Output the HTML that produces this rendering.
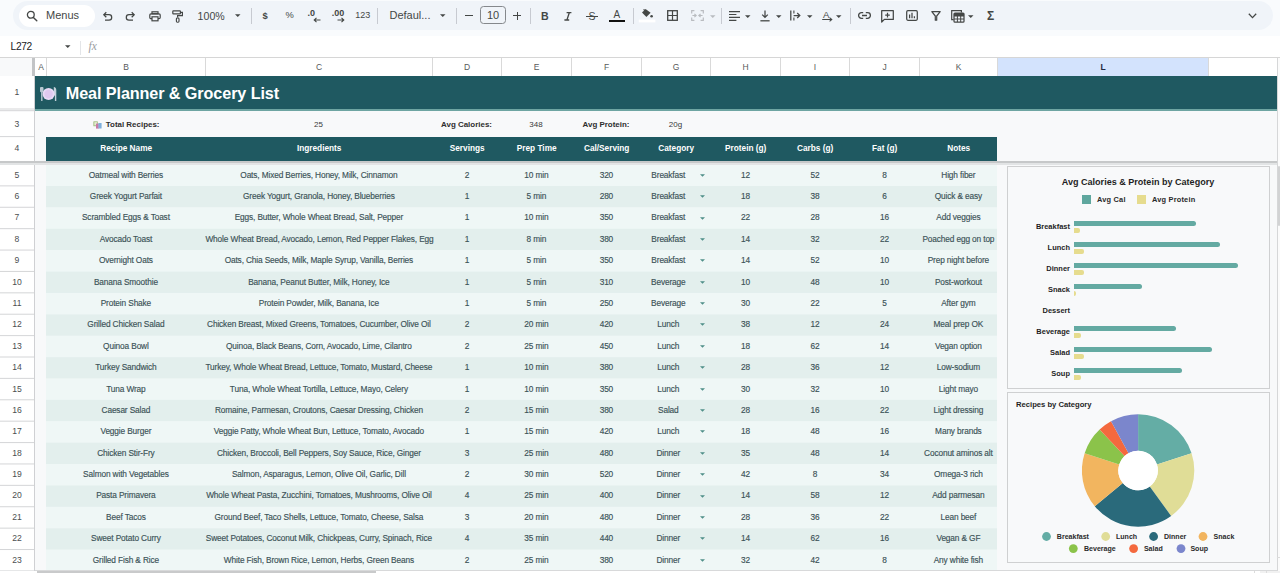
<!DOCTYPE html>
<html lang="en"><head><meta charset="utf-8"><title>Meal Planner &amp; Grocery List</title>
<style>
html,body{margin:0;padding:0}
body{width:1280px;height:573px;overflow:hidden;position:relative;background:#f9fbfd;font-family:"Liberation Sans",Arial,sans-serif;color:#444746}
.abs,.c,.t{position:absolute}
.t{white-space:nowrap;line-height:1}
.c{white-space:nowrap;text-align:center;z-index:2;font-size:8.3px;letter-spacing:-0.13px;-webkit-text-stroke:0.15px #3b5257;color:#3b5257;line-height:21.4px;height:21.4px}
.h{position:absolute;white-space:nowrap;text-align:center;font-size:8.25px;font-weight:700;color:#fff;line-height:24px;height:24px;top:136.5px}
.ch{position:absolute;top:58px;height:18px;line-height:18px;font-size:8.5px;color:#575a5a;text-align:center;border-right:1px solid #d9d9d9;box-sizing:border-box}
.rh{position:absolute;left:0;width:34px;text-align:center;font-size:8.6px;color:#4c4f50;box-sizing:border-box}
.sep{position:absolute;top:8px;width:1px;height:16px;background:#c7cad1}
.tb{position:absolute;font-size:11px;color:#444746;white-space:nowrap;line-height:1}
svg{position:absolute;overflow:visible}
</style></head><body>

<div class="abs" style="left:13px;top:1px;width:1260px;height:29px;border-radius:15px;background:#f0f4f9"></div>
<div class="abs" style="left:18.5px;top:5px;width:76px;height:21.5px;border-radius:11px;background:#fff"></div>
<svg style="left:26px;top:10px" width="12" height="12" viewBox="0 0 12 12"><circle cx="4.8" cy="4.8" r="3.4" fill="none" stroke="#444746" stroke-width="1.3"/><path d="M7.4 7.4 L10.8 10.8" stroke="#444746" stroke-width="1.4" stroke-linecap="round"/></svg>
<div class="tb" style="left:46px;top:10px;font-size:11px">Menus</div>
<svg style="left:102px;top:11px" width="11" height="11" viewBox="0 0 11 11"><path d="M2 3.7 H7 A2.7 2.7 0 0 1 7 9.1 H3" fill="none" stroke="#444746" stroke-width="1.25"/><path d="M4.3 1.2 L1.8 3.7 L4.3 6.2" fill="none" stroke="#444746" stroke-width="1.25"/></svg>
<svg style="left:125px;top:11px" width="11" height="11" viewBox="0 0 11 11"><path d="M9 3.7 H4 A2.7 2.7 0 0 0 4 9.1 H8" fill="none" stroke="#444746" stroke-width="1.25"/><path d="M6.7 1.2 L9.2 3.7 L6.7 6.2" fill="none" stroke="#444746" stroke-width="1.25"/></svg>
<svg style="left:148.5px;top:9.5px" width="12" height="12" viewBox="0 0 12 12"><rect x="3" y="1.8" width="6" height="2" fill="none" stroke="#444746" stroke-width="1.2"/><rect x="0.8" y="3.8" width="10.4" height="4.8" rx="1.2" fill="none" stroke="#444746" stroke-width="1.2"/><rect x="3" y="6.8" width="6" height="4" fill="#f0f4f9" stroke="#444746" stroke-width="1.2"/></svg>
<svg style="left:172px;top:10px" width="12" height="13" viewBox="0 0 12 13"><rect x="0.8" y="0.8" width="7.6" height="3" rx="0.6" fill="none" stroke="#444746" stroke-width="1.2"/><path d="M8.4 2.3 H10.4 V5.6 H5.6 V7.6" fill="none" stroke="#444746" stroke-width="1.2"/><rect x="4.4" y="8" width="2.6" height="4.2" rx="0.9" fill="none" stroke="#444746" stroke-width="1.15"/></svg>
<div class="tb" style="left:197.6px;top:10.8px;font-size:10.6px">100%</div>
<svg style="left:234.7px;top:14.0px" width="5.5" height="3.0" viewBox="0 0 10 5"><path d="M0 0 H10 L5 5 Z" fill="#444746"/></svg>
<div class="sep" style="left:251px"></div>
<div class="tb" style="left:262.6px;top:10.8px;font-size:9.4px;font-weight:700">$</div>
<div class="tb" style="left:285.6px;top:11px;font-size:9.3px">%</div>
<div class="tb" style="left:307.4px;top:9.3px;font-size:9px;font-weight:700">.0</div>
<svg style="left:313px;top:17px" width="8" height="6" viewBox="0 0 8 6"><path d="M7.5 3 H1.5 M3.5 0.8 L1.2 3 L3.5 5.2" fill="none" stroke="#444746" stroke-width="1.1"/></svg>
<div class="tb" style="left:331.8px;top:9.3px;font-size:9px;font-weight:700">.00</div>
<svg style="left:337px;top:17px" width="8" height="6" viewBox="0 0 8 6"><path d="M0.5 3 H6.5 M4.5 0.8 L6.8 3 L4.5 5.2" fill="none" stroke="#444746" stroke-width="1.1"/></svg>
<div class="tb" style="left:355.2px;top:11px;font-size:9px">123</div>
<div class="sep" style="left:377px"></div>
<div class="tb" style="left:389.5px;top:10px;font-size:11px">Defaul...</div>
<svg style="left:439.8px;top:14.1px" width="5.5" height="3.0" viewBox="0 0 10 5"><path d="M0 0 H10 L5 5 Z" fill="#444746"/></svg>
<div class="sep" style="left:456px"></div>
<div class="abs" style="left:465px;top:15px;width:7.5px;height:1.3px;background:#444746"></div>
<div class="abs" style="left:480.3px;top:6.3px;width:25.6px;height:18.2px;border:1px solid #85888c;border-radius:3.5px;box-sizing:border-box"></div>
<div class="tb" style="left:480.5px;top:10px;width:25px;text-align:center;font-size:11px">10</div>
<div class="abs" style="left:513px;top:15.1px;width:8px;height:1.1px;background:#444746"></div>
<div class="abs" style="left:516.5px;top:11.6px;width:1.1px;height:8px;background:#444746"></div>
<div class="sep" style="left:529.5px"></div>
<div class="tb" style="left:541px;top:10.6px;font-size:10.6px;font-weight:700">B</div>
<svg style="left:564px;top:11.5px" width="8" height="9" viewBox="0 0 8 9"><path d="M2.6 0.7 H7.4 M0.4 8 H5.2 M5.3 0.7 L2.9 8" fill="none" stroke="#444746" stroke-width="1.3"/></svg>
<div class="tb" style="left:588.5px;top:10.5px;font-size:10.5px">S</div>
<div class="abs" style="left:586px;top:15.6px;width:11.5px;height:1.1px;background:#444746"></div>
<div class="tb" style="left:613.6px;top:9.6px;font-size:10px">A</div>
<div class="abs" style="left:608.7px;top:19.8px;width:16.2px;height:2.5px;background:#111"></div>
<div class="sep" style="left:632.5px"></div>
<svg style="left:641px;top:8px" width="13" height="15" viewBox="0 0 13 15"><path d="M4.6 1 L1 4.6 L5.4 9 L9.6 4.8 Z" fill="#444746"/><path d="M2.6 1.4 L5.4 4" stroke="#444746" stroke-width="1.2" fill="none"/><circle cx="10.6" cy="8.2" r="1.3" fill="#444746"/><rect x="-2.2" y="11.6" width="16.6" height="2.8" fill="#fff"/></svg>
<svg style="left:667px;top:10px" width="11" height="11" viewBox="0 0 11 11"><rect x="0.7" y="0.7" width="9.6" height="9.6" fill="none" stroke="#444746" stroke-width="1.3"/><path d="M5.5 0.7 V10.3 M0.7 5.5 H10.3" stroke="#444746" stroke-width="1.2"/></svg>
<svg style="left:691px;top:10px" width="13" height="11" viewBox="0 0 13 11"><path d="M3.4 0.7 H0.7 V3.4 M9.6 0.7 H12.3 V3.4 M3.4 10.3 H0.7 V7.6 M9.6 10.3 H12.3 V7.6" fill="none" stroke="#b9bcc0" stroke-width="1.2"/><path d="M1.4 5.5 H5 M3.4 3.8 L5.2 5.5 L3.4 7.2 M11.6 5.5 H8 M9.6 3.8 L7.8 5.5 L9.6 7.2" fill="none" stroke="#b9bcc0" stroke-width="1.1"/></svg>
<svg style="left:709.8px;top:14.5px" width="5.5" height="3.0" viewBox="0 0 10 5"><path d="M0 0 H10 L5 5 Z" fill="#b9bcc0"/></svg>
<div class="sep" style="left:721px"></div>
<svg style="left:729px;top:10.5px" width="11" height="10" viewBox="0 0 11 10"><path d="M0 0.6 H11 M0 3.5 H7.4 M0 6.4 H11 M0 9.3 H7.4" stroke="#444746" stroke-width="1.15"/></svg>
<svg style="left:744.8px;top:14.5px" width="5.5" height="3.0" viewBox="0 0 10 5"><path d="M0 0 H10 L5 5 Z" fill="#444746"/></svg>
<svg style="left:760px;top:9.5px" width="10" height="12" viewBox="0 0 10 12"><path d="M5 0.4 V7 M2.2 4.6 L5 7.4 L7.8 4.6" fill="none" stroke="#444746" stroke-width="1.25"/><path d="M0.4 10.8 H9.6" stroke="#444746" stroke-width="1.3"/></svg>
<svg style="left:776.2px;top:14.5px" width="5.5" height="3.0" viewBox="0 0 10 5"><path d="M0 0 H10 L5 5 Z" fill="#444746"/></svg>
<svg style="left:790px;top:10px" width="11" height="11" viewBox="0 0 11 11"><path d="M0.8 0.4 V10.6" stroke="#444746" stroke-width="1.3"/><path d="M3.6 5.5 H9.6 M7.2 3 L9.8 5.5 L7.2 8" fill="none" stroke="#444746" stroke-width="1.25"/><path d="M3.9 0.6 V3.4 M3.9 7.6 V10.4" stroke="#444746" stroke-width="1.1"/></svg>
<svg style="left:806.8px;top:14.5px" width="5.5" height="3.0" viewBox="0 0 10 5"><path d="M0 0 H10 L5 5 Z" fill="#444746"/></svg>
<div class="tb" style="left:823px;top:10.4px;font-size:9.6px">A</div>
<svg style="left:821.5px;top:17.4px" width="11" height="5" viewBox="0 0 11 5"><path d="M0.2 2.5 H9.4 M7.6 0.6 L9.8 2.5 L7.6 4.4" fill="none" stroke="#444746" stroke-width="1.05"/></svg>
<svg style="left:836.2px;top:14.5px" width="5.5" height="3.0" viewBox="0 0 10 5"><path d="M0 0 H10 L5 5 Z" fill="#444746"/></svg>
<div class="sep" style="left:849.5px"></div>
<svg style="left:857.5px;top:12px" width="13" height="7" viewBox="0 0 13 7"><path d="M5.2 0.7 H3.4 A2.8 2.8 0 0 0 3.4 6.3 H5.2 M7.8 0.7 H9.6 A2.8 2.8 0 0 1 9.6 6.3 H7.8 M4 3.5 H9" fill="none" stroke="#444746" stroke-width="1.3"/></svg>
<svg style="left:881px;top:9.5px" width="13" height="13" viewBox="0 0 13 13"><path d="M0.7 0.7 H12.3 V9.4 H3.4 L0.7 12 Z" fill="none" stroke="#444746" stroke-width="1.25" stroke-linejoin="round"/><path d="M6.5 2.8 V7.4 M4.2 5.1 H8.8" stroke="#444746" stroke-width="1.2"/></svg>
<svg style="left:905.5px;top:10px" width="12" height="11" viewBox="0 0 12 11"><rect x="0.7" y="0.7" width="10.6" height="9.6" rx="1.2" fill="none" stroke="#444746" stroke-width="1.25"/><path d="M3.6 8.2 V4.6 M6 8.2 V2.8 M8.4 8.2 V6.2" stroke="#444746" stroke-width="1.25"/></svg>
<svg style="left:931px;top:10.5px" width="10" height="10" viewBox="0 0 10 10"><path d="M0.8 0.7 H9.2 L5.7 5 V9.2 H4.3 V5 Z" fill="none" stroke="#444746" stroke-width="1.2" stroke-linejoin="round"/></svg>
<svg style="left:950.5px;top:9.5px" width="14" height="13" viewBox="0 0 14 13"><path d="M2.6 9.6 H0.7 V0.7 H10.4 V2.4" fill="none" stroke="#444746" stroke-width="1.2"/><rect x="3" y="3" width="10" height="9.2" rx="1" fill="none" stroke="#444746" stroke-width="1.25"/><path d="M3 6 H13 M3 9 H13 M6.4 6 V12 M9.7 6 V12" stroke="#444746" stroke-width="1"/><rect x="3" y="3" width="10" height="3" fill="#444746"/></svg>
<svg style="left:968.2px;top:14.5px" width="5.5" height="3.0" viewBox="0 0 10 5"><path d="M0 0 H10 L5 5 Z" fill="#444746"/></svg>
<div class="tb" style="left:987px;top:9.5px;font-size:12px;font-weight:700">Σ</div>
<svg style="left:1248px;top:13px" width="9" height="6" viewBox="0 0 9 6"><path d="M0.8 0.8 L4.5 4.6 L8.2 0.8" fill="none" stroke="#444746" stroke-width="1.3"/></svg>
<div class="abs" style="left:0;top:36px;width:1280px;height:21px;background:#fff"></div>
<div class="tb" style="left:10.6px;top:41.8px;font-size:10.2px;letter-spacing:-0.35px;color:#202124">L272</div>
<svg style="left:65.0px;top:45.4px" width="5.5" height="3.0" viewBox="0 0 10 5"><path d="M0 0 H10 L5 5 Z" fill="#444746"/></svg>
<div class="abs" style="left:79.5px;top:41px;width:1px;height:14px;background:#e3e5e8"></div>
<div class="tb" style="left:88.5px;top:40.5px;font-size:11.5px;font-style:italic;color:#9a9d9f;font-family:'Liberation Serif',serif">fx</div>
<div class="abs" style="left:0;top:57px;width:1280px;height:1px;background:#d6d6d6"></div>
<div class="abs" style="left:0;top:58px;width:1277px;height:515px;background:#fff"></div>
<div class="abs" style="left:0;top:58px;width:32px;height:18px;background:#f8f9fa"></div>
<div class="ch" style="left:36px;width:11px">A</div>
<div class="ch" style="left:47px;width:159px">B</div>
<div class="ch" style="left:206px;width:227px">C</div>
<div class="ch" style="left:433px;width:69px">D</div>
<div class="ch" style="left:502px;width:70px">E</div>
<div class="ch" style="left:572px;width:70px">F</div>
<div class="ch" style="left:642px;width:69px">G</div>
<div class="ch" style="left:711px;width:70px">H</div>
<div class="ch" style="left:781px;width:69px">I</div>
<div class="ch" style="left:850px;width:70px">J</div>
<div class="ch" style="left:920px;width:78px">K</div>
<div class="ch" style="left:998px;width:211px;background:#d3e3fd;color:#1f2a44;font-weight:700">L</div>
<div class="ch" style="left:1208px;width:69px;border-right:none"></div>
<div class="abs" style="left:32px;top:58px;width:3px;height:18px;background:#c2c4c6"></div>
<div class="abs" style="left:0;top:75.5px;width:35px;height:1px;background:#d5d5d5"></div>
<div class="abs" style="left:35px;top:76px;width:1242px;height:495px;background:#f8f9fa"></div>
<div class="abs" style="left:35px;top:76px;width:1241.5px;height:32.7px;background:#1f5961"></div>
<div class="abs" style="left:35px;top:108.7px;width:1241.5px;height:2px;background:#6ea5a2"></div>
<svg style="left:39px;top:86px" width="18" height="16" viewBox="0 0 18 16"><rect x="1" y="1" width="3.5" height="5.2" rx="1" fill="#b7c7d2"/><rect x="2.1" y="1" width="1.4" height="14" rx="0.6" fill="#b7c7d2"/><path d="M14.8 1 Q17.3 1.2 17.3 4.5 V15 H15.9 V9.4 H14.8 Z" fill="#c3d1da"/><circle cx="9.6" cy="8" r="6.1" fill="#e9daf5"/><circle cx="9.6" cy="8" r="4.2" fill="#e0c9ef"/></svg>
<div class="t" style="left:65.8px;top:85.2px;font-size:16.2px;letter-spacing:-0.1px;font-weight:700;color:#fff">Meal Planner &amp; Grocery List</div>
<svg style="left:93.4px;top:120.8px" width="9" height="8" viewBox="0 0 9 8"><rect x="0.3" y="0.3" width="4.6" height="5" rx="0.6" fill="#a9c48a"/><rect x="1.4" y="1.2" width="2.6" height="3" fill="#e6ecd2"/><rect x="3" y="2.6" width="2.8" height="5" fill="#c77aa8"/><rect x="5.4" y="2" width="3.2" height="5.6" rx="0.5" fill="#7fb0dc"/></svg>
<div class="t" style="left:105.8px;top:112px;height:26px;line-height:26px;font-size:7.95px;font-weight:700;color:#2e2e2e">Total Recipes:</div>
<div class="t" style="left:205px;width:227px;top:112px;height:26px;line-height:26px;text-align:center;font-size:8px;font-weight:400;color:#3a3a3a">25</div>
<div class="t" style="left:432px;width:69px;top:112px;height:26px;line-height:26px;text-align:center;font-size:7.95px;font-weight:700;color:#2e2e2e">Avg Calories:</div>
<div class="t" style="left:501px;width:70px;top:112px;height:26px;line-height:26px;text-align:center;font-size:8px;font-weight:400;color:#3a3a3a">348</div>
<div class="t" style="left:571px;width:70px;top:112px;height:26px;line-height:26px;text-align:center;font-size:7.95px;font-weight:700;color:#2e2e2e">Avg Protein:</div>
<div class="t" style="left:641px;width:69px;top:112px;height:26px;line-height:26px;text-align:center;font-size:8px;font-weight:400;color:#3a3a3a">20g</div>
<div class="abs" style="left:46px;top:137px;width:951px;height:23.7px;background:#1f5961"></div>
<div class="h" style="left:46.7px;width:159px">Recipe Name</div>
<div class="h" style="left:205.7px;width:227px">Ingredients</div>
<div class="h" style="left:432.7px;width:69px">Servings</div>
<div class="h" style="left:501.7px;width:70px">Prep Time</div>
<div class="h" style="left:571.7px;width:70px">Cal/Serving</div>
<div class="h" style="left:641.7px;width:69px">Category</div>
<div class="h" style="left:710.7px;width:70px">Protein (g)</div>
<div class="h" style="left:780.7px;width:69px">Carbs (g)</div>
<div class="h" style="left:849.7px;width:70px">Fat (g)</div>
<div class="h" style="left:919.7px;width:78px">Notes</div>
<svg style="left:46px;top:0" width="951" height="573"><rect x="0" y="164.60" width="951" height="21.69" fill="#eff7f6"/></svg>
<div class="c" style="left:46.4px;width:159px;top:164.60px">Oatmeal with Berries</div>
<div class="c" style="left:205.4px;width:227px;top:164.60px">Oats, Mixed Berries, Honey, Milk, Cinnamon</div>
<div class="c" style="left:432.4px;width:69px;top:164.60px">2</div>
<div class="c" style="left:501.4px;width:70px;top:164.60px">10 min</div>
<div class="c" style="left:571.4px;width:70px;top:164.60px">320</div>
<div class="c" style="left:640.8px;width:55px;top:164.60px">Breakfast</div>
<svg style="left:700.1px;top:173.7px" width="5.0" height="2.8" viewBox="0 0 10 5"><path d="M0 0 H10 L5 5 Z" fill="#4f8f88"/></svg>
<div class="c" style="left:710.4px;width:70px;top:164.60px">12</div>
<div class="c" style="left:780.4px;width:69px;top:164.60px">52</div>
<div class="c" style="left:849.4px;width:70px;top:164.60px">8</div>
<div class="c" style="left:919.4px;width:78px;top:164.60px">High fiber</div>
<svg style="left:46px;top:0" width="951" height="573"><rect x="0" y="185.99" width="951" height="21.69" fill="#e3efed"/></svg>
<div class="c" style="left:46.4px;width:159px;top:185.99px">Greek Yogurt Parfait</div>
<div class="c" style="left:205.4px;width:227px;top:185.99px">Greek Yogurt, Granola, Honey, Blueberries</div>
<div class="c" style="left:432.4px;width:69px;top:185.99px">1</div>
<div class="c" style="left:501.4px;width:70px;top:185.99px">5 min</div>
<div class="c" style="left:571.4px;width:70px;top:185.99px">280</div>
<div class="c" style="left:640.8px;width:55px;top:185.99px">Breakfast</div>
<svg style="left:700.1px;top:195.1px" width="5.0" height="2.8" viewBox="0 0 10 5"><path d="M0 0 H10 L5 5 Z" fill="#4f8f88"/></svg>
<div class="c" style="left:710.4px;width:70px;top:185.99px">18</div>
<div class="c" style="left:780.4px;width:69px;top:185.99px">38</div>
<div class="c" style="left:849.4px;width:70px;top:185.99px">6</div>
<div class="c" style="left:919.4px;width:78px;top:185.99px">Quick &amp; easy</div>
<svg style="left:46px;top:0" width="951" height="573"><rect x="0" y="207.38" width="951" height="21.69" fill="#eff7f6"/></svg>
<div class="c" style="left:46.4px;width:159px;top:207.38px">Scrambled Eggs &amp; Toast</div>
<div class="c" style="left:205.4px;width:227px;top:207.38px">Eggs, Butter, Whole Wheat Bread, Salt, Pepper</div>
<div class="c" style="left:432.4px;width:69px;top:207.38px">1</div>
<div class="c" style="left:501.4px;width:70px;top:207.38px">10 min</div>
<div class="c" style="left:571.4px;width:70px;top:207.38px">350</div>
<div class="c" style="left:640.8px;width:55px;top:207.38px">Breakfast</div>
<svg style="left:700.1px;top:216.5px" width="5.0" height="2.8" viewBox="0 0 10 5"><path d="M0 0 H10 L5 5 Z" fill="#4f8f88"/></svg>
<div class="c" style="left:710.4px;width:70px;top:207.38px">22</div>
<div class="c" style="left:780.4px;width:69px;top:207.38px">28</div>
<div class="c" style="left:849.4px;width:70px;top:207.38px">16</div>
<div class="c" style="left:919.4px;width:78px;top:207.38px">Add veggies</div>
<svg style="left:46px;top:0" width="951" height="573"><rect x="0" y="228.77" width="951" height="21.69" fill="#e3efed"/></svg>
<div class="c" style="left:46.4px;width:159px;top:228.77px">Avocado Toast</div>
<div class="c" style="left:205.4px;width:227px;top:228.77px">Whole Wheat Bread, Avocado, Lemon, Red Pepper Flakes, Egg</div>
<div class="c" style="left:432.4px;width:69px;top:228.77px">1</div>
<div class="c" style="left:501.4px;width:70px;top:228.77px">8 min</div>
<div class="c" style="left:571.4px;width:70px;top:228.77px">380</div>
<div class="c" style="left:640.8px;width:55px;top:228.77px">Breakfast</div>
<svg style="left:700.1px;top:237.9px" width="5.0" height="2.8" viewBox="0 0 10 5"><path d="M0 0 H10 L5 5 Z" fill="#4f8f88"/></svg>
<div class="c" style="left:710.4px;width:70px;top:228.77px">14</div>
<div class="c" style="left:780.4px;width:69px;top:228.77px">32</div>
<div class="c" style="left:849.4px;width:70px;top:228.77px">22</div>
<div class="c" style="left:919.4px;width:78px;top:228.77px">Poached egg on top</div>
<svg style="left:46px;top:0" width="951" height="573"><rect x="0" y="250.16" width="951" height="21.69" fill="#eff7f6"/></svg>
<div class="c" style="left:46.4px;width:159px;top:250.16px">Overnight Oats</div>
<div class="c" style="left:205.4px;width:227px;top:250.16px">Oats, Chia Seeds, Milk, Maple Syrup, Vanilla, Berries</div>
<div class="c" style="left:432.4px;width:69px;top:250.16px">1</div>
<div class="c" style="left:501.4px;width:70px;top:250.16px">5 min</div>
<div class="c" style="left:571.4px;width:70px;top:250.16px">350</div>
<div class="c" style="left:640.8px;width:55px;top:250.16px">Breakfast</div>
<svg style="left:700.1px;top:259.3px" width="5.0" height="2.8" viewBox="0 0 10 5"><path d="M0 0 H10 L5 5 Z" fill="#4f8f88"/></svg>
<div class="c" style="left:710.4px;width:70px;top:250.16px">14</div>
<div class="c" style="left:780.4px;width:69px;top:250.16px">52</div>
<div class="c" style="left:849.4px;width:70px;top:250.16px">10</div>
<div class="c" style="left:919.4px;width:78px;top:250.16px">Prep night before</div>
<svg style="left:46px;top:0" width="951" height="573"><rect x="0" y="271.55" width="951" height="21.69" fill="#e3efed"/></svg>
<div class="c" style="left:46.4px;width:159px;top:271.55px">Banana Smoothie</div>
<div class="c" style="left:205.4px;width:227px;top:271.55px">Banana, Peanut Butter, Milk, Honey, Ice</div>
<div class="c" style="left:432.4px;width:69px;top:271.55px">1</div>
<div class="c" style="left:501.4px;width:70px;top:271.55px">5 min</div>
<div class="c" style="left:571.4px;width:70px;top:271.55px">310</div>
<div class="c" style="left:640.8px;width:55px;top:271.55px">Beverage</div>
<svg style="left:700.1px;top:280.6px" width="5.0" height="2.8" viewBox="0 0 10 5"><path d="M0 0 H10 L5 5 Z" fill="#4f8f88"/></svg>
<div class="c" style="left:710.4px;width:70px;top:271.55px">10</div>
<div class="c" style="left:780.4px;width:69px;top:271.55px">48</div>
<div class="c" style="left:849.4px;width:70px;top:271.55px">10</div>
<div class="c" style="left:919.4px;width:78px;top:271.55px">Post-workout</div>
<svg style="left:46px;top:0" width="951" height="573"><rect x="0" y="292.94" width="951" height="21.69" fill="#eff7f6"/></svg>
<div class="c" style="left:46.4px;width:159px;top:292.94px">Protein Shake</div>
<div class="c" style="left:205.4px;width:227px;top:292.94px">Protein Powder, Milk, Banana, Ice</div>
<div class="c" style="left:432.4px;width:69px;top:292.94px">1</div>
<div class="c" style="left:501.4px;width:70px;top:292.94px">5 min</div>
<div class="c" style="left:571.4px;width:70px;top:292.94px">250</div>
<div class="c" style="left:640.8px;width:55px;top:292.94px">Beverage</div>
<svg style="left:700.1px;top:302.0px" width="5.0" height="2.8" viewBox="0 0 10 5"><path d="M0 0 H10 L5 5 Z" fill="#4f8f88"/></svg>
<div class="c" style="left:710.4px;width:70px;top:292.94px">30</div>
<div class="c" style="left:780.4px;width:69px;top:292.94px">22</div>
<div class="c" style="left:849.4px;width:70px;top:292.94px">5</div>
<div class="c" style="left:919.4px;width:78px;top:292.94px">After gym</div>
<svg style="left:46px;top:0" width="951" height="573"><rect x="0" y="314.33" width="951" height="21.69" fill="#e3efed"/></svg>
<div class="c" style="left:46.4px;width:159px;top:314.33px">Grilled Chicken Salad</div>
<div class="c" style="left:205.4px;width:227px;top:314.33px">Chicken Breast, Mixed Greens, Tomatoes, Cucumber, Olive Oil</div>
<div class="c" style="left:432.4px;width:69px;top:314.33px">2</div>
<div class="c" style="left:501.4px;width:70px;top:314.33px">20 min</div>
<div class="c" style="left:571.4px;width:70px;top:314.33px">420</div>
<div class="c" style="left:640.8px;width:55px;top:314.33px">Lunch</div>
<svg style="left:700.1px;top:323.4px" width="5.0" height="2.8" viewBox="0 0 10 5"><path d="M0 0 H10 L5 5 Z" fill="#4f8f88"/></svg>
<div class="c" style="left:710.4px;width:70px;top:314.33px">38</div>
<div class="c" style="left:780.4px;width:69px;top:314.33px">12</div>
<div class="c" style="left:849.4px;width:70px;top:314.33px">24</div>
<div class="c" style="left:919.4px;width:78px;top:314.33px">Meal prep OK</div>
<svg style="left:46px;top:0" width="951" height="573"><rect x="0" y="335.72" width="951" height="21.69" fill="#eff7f6"/></svg>
<div class="c" style="left:46.4px;width:159px;top:335.72px">Quinoa Bowl</div>
<div class="c" style="left:205.4px;width:227px;top:335.72px">Quinoa, Black Beans, Corn, Avocado, Lime, Cilantro</div>
<div class="c" style="left:432.4px;width:69px;top:335.72px">2</div>
<div class="c" style="left:501.4px;width:70px;top:335.72px">25 min</div>
<div class="c" style="left:571.4px;width:70px;top:335.72px">450</div>
<div class="c" style="left:640.8px;width:55px;top:335.72px">Lunch</div>
<svg style="left:700.1px;top:344.8px" width="5.0" height="2.8" viewBox="0 0 10 5"><path d="M0 0 H10 L5 5 Z" fill="#4f8f88"/></svg>
<div class="c" style="left:710.4px;width:70px;top:335.72px">18</div>
<div class="c" style="left:780.4px;width:69px;top:335.72px">62</div>
<div class="c" style="left:849.4px;width:70px;top:335.72px">14</div>
<div class="c" style="left:919.4px;width:78px;top:335.72px">Vegan option</div>
<svg style="left:46px;top:0" width="951" height="573"><rect x="0" y="357.11" width="951" height="21.69" fill="#e3efed"/></svg>
<div class="c" style="left:46.4px;width:159px;top:357.11px">Turkey Sandwich</div>
<div class="c" style="left:205.4px;width:227px;top:357.11px">Turkey, Whole Wheat Bread, Lettuce, Tomato, Mustard, Cheese</div>
<div class="c" style="left:432.4px;width:69px;top:357.11px">1</div>
<div class="c" style="left:501.4px;width:70px;top:357.11px">10 min</div>
<div class="c" style="left:571.4px;width:70px;top:357.11px">380</div>
<div class="c" style="left:640.8px;width:55px;top:357.11px">Lunch</div>
<svg style="left:700.1px;top:366.2px" width="5.0" height="2.8" viewBox="0 0 10 5"><path d="M0 0 H10 L5 5 Z" fill="#4f8f88"/></svg>
<div class="c" style="left:710.4px;width:70px;top:357.11px">28</div>
<div class="c" style="left:780.4px;width:69px;top:357.11px">36</div>
<div class="c" style="left:849.4px;width:70px;top:357.11px">12</div>
<div class="c" style="left:919.4px;width:78px;top:357.11px">Low-sodium</div>
<svg style="left:46px;top:0" width="951" height="573"><rect x="0" y="378.50" width="951" height="21.69" fill="#eff7f6"/></svg>
<div class="c" style="left:46.4px;width:159px;top:378.50px">Tuna Wrap</div>
<div class="c" style="left:205.4px;width:227px;top:378.50px">Tuna, Whole Wheat Tortilla, Lettuce, Mayo, Celery</div>
<div class="c" style="left:432.4px;width:69px;top:378.50px">1</div>
<div class="c" style="left:501.4px;width:70px;top:378.50px">10 min</div>
<div class="c" style="left:571.4px;width:70px;top:378.50px">350</div>
<div class="c" style="left:640.8px;width:55px;top:378.50px">Lunch</div>
<svg style="left:700.1px;top:387.6px" width="5.0" height="2.8" viewBox="0 0 10 5"><path d="M0 0 H10 L5 5 Z" fill="#4f8f88"/></svg>
<div class="c" style="left:710.4px;width:70px;top:378.50px">30</div>
<div class="c" style="left:780.4px;width:69px;top:378.50px">32</div>
<div class="c" style="left:849.4px;width:70px;top:378.50px">10</div>
<div class="c" style="left:919.4px;width:78px;top:378.50px">Light mayo</div>
<svg style="left:46px;top:0" width="951" height="573"><rect x="0" y="399.89" width="951" height="21.69" fill="#e3efed"/></svg>
<div class="c" style="left:46.4px;width:159px;top:399.89px">Caesar Salad</div>
<div class="c" style="left:205.4px;width:227px;top:399.89px">Romaine, Parmesan, Croutons, Caesar Dressing, Chicken</div>
<div class="c" style="left:432.4px;width:69px;top:399.89px">2</div>
<div class="c" style="left:501.4px;width:70px;top:399.89px">15 min</div>
<div class="c" style="left:571.4px;width:70px;top:399.89px">380</div>
<div class="c" style="left:640.8px;width:55px;top:399.89px">Salad</div>
<svg style="left:700.1px;top:409.0px" width="5.0" height="2.8" viewBox="0 0 10 5"><path d="M0 0 H10 L5 5 Z" fill="#4f8f88"/></svg>
<div class="c" style="left:710.4px;width:70px;top:399.89px">28</div>
<div class="c" style="left:780.4px;width:69px;top:399.89px">16</div>
<div class="c" style="left:849.4px;width:70px;top:399.89px">22</div>
<div class="c" style="left:919.4px;width:78px;top:399.89px">Light dressing</div>
<svg style="left:46px;top:0" width="951" height="573"><rect x="0" y="421.28" width="951" height="21.69" fill="#eff7f6"/></svg>
<div class="c" style="left:46.4px;width:159px;top:421.28px">Veggie Burger</div>
<div class="c" style="left:205.4px;width:227px;top:421.28px">Veggie Patty, Whole Wheat Bun, Lettuce, Tomato, Avocado</div>
<div class="c" style="left:432.4px;width:69px;top:421.28px">1</div>
<div class="c" style="left:501.4px;width:70px;top:421.28px">15 min</div>
<div class="c" style="left:571.4px;width:70px;top:421.28px">420</div>
<div class="c" style="left:640.8px;width:55px;top:421.28px">Lunch</div>
<svg style="left:700.1px;top:430.4px" width="5.0" height="2.8" viewBox="0 0 10 5"><path d="M0 0 H10 L5 5 Z" fill="#4f8f88"/></svg>
<div class="c" style="left:710.4px;width:70px;top:421.28px">18</div>
<div class="c" style="left:780.4px;width:69px;top:421.28px">48</div>
<div class="c" style="left:849.4px;width:70px;top:421.28px">16</div>
<div class="c" style="left:919.4px;width:78px;top:421.28px">Many brands</div>
<svg style="left:46px;top:0" width="951" height="573"><rect x="0" y="442.67" width="951" height="21.69" fill="#e3efed"/></svg>
<div class="c" style="left:46.4px;width:159px;top:442.67px">Chicken Stir-Fry</div>
<div class="c" style="left:205.4px;width:227px;top:442.67px">Chicken, Broccoli, Bell Peppers, Soy Sauce, Rice, Ginger</div>
<div class="c" style="left:432.4px;width:69px;top:442.67px">3</div>
<div class="c" style="left:501.4px;width:70px;top:442.67px">25 min</div>
<div class="c" style="left:571.4px;width:70px;top:442.67px">480</div>
<div class="c" style="left:640.8px;width:55px;top:442.67px">Dinner</div>
<svg style="left:700.1px;top:451.8px" width="5.0" height="2.8" viewBox="0 0 10 5"><path d="M0 0 H10 L5 5 Z" fill="#4f8f88"/></svg>
<div class="c" style="left:710.4px;width:70px;top:442.67px">35</div>
<div class="c" style="left:780.4px;width:69px;top:442.67px">48</div>
<div class="c" style="left:849.4px;width:70px;top:442.67px">14</div>
<div class="c" style="left:919.4px;width:78px;top:442.67px">Coconut aminos alt</div>
<svg style="left:46px;top:0" width="951" height="573"><rect x="0" y="464.06" width="951" height="21.69" fill="#eff7f6"/></svg>
<div class="c" style="left:46.4px;width:159px;top:464.06px">Salmon with Vegetables</div>
<div class="c" style="left:205.4px;width:227px;top:464.06px">Salmon, Asparagus, Lemon, Olive Oil, Garlic, Dill</div>
<div class="c" style="left:432.4px;width:69px;top:464.06px">2</div>
<div class="c" style="left:501.4px;width:70px;top:464.06px">30 min</div>
<div class="c" style="left:571.4px;width:70px;top:464.06px">520</div>
<div class="c" style="left:640.8px;width:55px;top:464.06px">Dinner</div>
<svg style="left:700.1px;top:473.2px" width="5.0" height="2.8" viewBox="0 0 10 5"><path d="M0 0 H10 L5 5 Z" fill="#4f8f88"/></svg>
<div class="c" style="left:710.4px;width:70px;top:464.06px">42</div>
<div class="c" style="left:780.4px;width:69px;top:464.06px">8</div>
<div class="c" style="left:849.4px;width:70px;top:464.06px">34</div>
<div class="c" style="left:919.4px;width:78px;top:464.06px">Omega-3 rich</div>
<svg style="left:46px;top:0" width="951" height="573"><rect x="0" y="485.45" width="951" height="21.69" fill="#e3efed"/></svg>
<div class="c" style="left:46.4px;width:159px;top:485.45px">Pasta Primavera</div>
<div class="c" style="left:205.4px;width:227px;top:485.45px">Whole Wheat Pasta, Zucchini, Tomatoes, Mushrooms, Olive Oil</div>
<div class="c" style="left:432.4px;width:69px;top:485.45px">4</div>
<div class="c" style="left:501.4px;width:70px;top:485.45px">25 min</div>
<div class="c" style="left:571.4px;width:70px;top:485.45px">400</div>
<div class="c" style="left:640.8px;width:55px;top:485.45px">Dinner</div>
<svg style="left:700.1px;top:494.5px" width="5.0" height="2.8" viewBox="0 0 10 5"><path d="M0 0 H10 L5 5 Z" fill="#4f8f88"/></svg>
<div class="c" style="left:710.4px;width:70px;top:485.45px">14</div>
<div class="c" style="left:780.4px;width:69px;top:485.45px">58</div>
<div class="c" style="left:849.4px;width:70px;top:485.45px">12</div>
<div class="c" style="left:919.4px;width:78px;top:485.45px">Add parmesan</div>
<svg style="left:46px;top:0" width="951" height="573"><rect x="0" y="506.84" width="951" height="21.69" fill="#eff7f6"/></svg>
<div class="c" style="left:46.4px;width:159px;top:506.84px">Beef Tacos</div>
<div class="c" style="left:205.4px;width:227px;top:506.84px">Ground Beef, Taco Shells, Lettuce, Tomato, Cheese, Salsa</div>
<div class="c" style="left:432.4px;width:69px;top:506.84px">3</div>
<div class="c" style="left:501.4px;width:70px;top:506.84px">20 min</div>
<div class="c" style="left:571.4px;width:70px;top:506.84px">480</div>
<div class="c" style="left:640.8px;width:55px;top:506.84px">Dinner</div>
<svg style="left:700.1px;top:515.9px" width="5.0" height="2.8" viewBox="0 0 10 5"><path d="M0 0 H10 L5 5 Z" fill="#4f8f88"/></svg>
<div class="c" style="left:710.4px;width:70px;top:506.84px">28</div>
<div class="c" style="left:780.4px;width:69px;top:506.84px">36</div>
<div class="c" style="left:849.4px;width:70px;top:506.84px">22</div>
<div class="c" style="left:919.4px;width:78px;top:506.84px">Lean beef</div>
<svg style="left:46px;top:0" width="951" height="573"><rect x="0" y="528.23" width="951" height="21.69" fill="#e3efed"/></svg>
<div class="c" style="left:46.4px;width:159px;top:528.23px">Sweet Potato Curry</div>
<div class="c" style="left:205.4px;width:227px;top:528.23px">Sweet Potatoes, Coconut Milk, Chickpeas, Curry, Spinach, Rice</div>
<div class="c" style="left:432.4px;width:69px;top:528.23px">4</div>
<div class="c" style="left:501.4px;width:70px;top:528.23px">35 min</div>
<div class="c" style="left:571.4px;width:70px;top:528.23px">440</div>
<div class="c" style="left:640.8px;width:55px;top:528.23px">Dinner</div>
<svg style="left:700.1px;top:537.3px" width="5.0" height="2.8" viewBox="0 0 10 5"><path d="M0 0 H10 L5 5 Z" fill="#4f8f88"/></svg>
<div class="c" style="left:710.4px;width:70px;top:528.23px">14</div>
<div class="c" style="left:780.4px;width:69px;top:528.23px">62</div>
<div class="c" style="left:849.4px;width:70px;top:528.23px">16</div>
<div class="c" style="left:919.4px;width:78px;top:528.23px">Vegan &amp; GF</div>
<svg style="left:46px;top:0" width="951" height="573"><rect x="0" y="549.62" width="951" height="20.99" fill="#eff7f6"/></svg>
<div class="c" style="left:46.4px;width:159px;top:549.62px">Grilled Fish &amp; Rice</div>
<div class="c" style="left:205.4px;width:227px;top:549.62px">White Fish, Brown Rice, Lemon, Herbs, Green Beans</div>
<div class="c" style="left:432.4px;width:69px;top:549.62px">2</div>
<div class="c" style="left:501.4px;width:70px;top:549.62px">25 min</div>
<div class="c" style="left:571.4px;width:70px;top:549.62px">380</div>
<div class="c" style="left:640.8px;width:55px;top:549.62px">Dinner</div>
<svg style="left:700.1px;top:558.7px" width="5.0" height="2.8" viewBox="0 0 10 5"><path d="M0 0 H10 L5 5 Z" fill="#4f8f88"/></svg>
<div class="c" style="left:710.4px;width:70px;top:549.62px">32</div>
<div class="c" style="left:780.4px;width:69px;top:549.62px">42</div>
<div class="c" style="left:849.4px;width:70px;top:549.62px">8</div>
<div class="c" style="left:919.4px;width:78px;top:549.62px">Any white fish</div>
<div class="abs" style="left:0;top:161px;width:1277px;height:2.4px;background:#c6c8c9"></div>
<div class="abs" style="left:0;top:163.4px;width:1277px;height:1.2px;background:#e2e4e5"></div>
<div class="abs" style="left:0;top:76px;width:34px;height:497px;background:#fff"></div>
<div class="abs" style="left:34px;top:76px;width:1px;height:497px;background:#cfd0d3"></div>
<div class="rh" style="top:76.00px;height:33.30px;line-height:32.80px">1</div>
<div class="rh" style="top:111.00px;height:26.00px;line-height:26.90px">3</div>
<div class="rh" style="top:137.00px;height:24.00px;line-height:23.90px">4</div>
<div class="rh" style="top:164.60px;height:21.39px;line-height:20.89px">5</div>
<div class="rh" style="top:185.99px;height:21.39px;line-height:20.89px">6</div>
<div class="rh" style="top:207.38px;height:21.39px;line-height:20.89px">7</div>
<div class="rh" style="top:228.77px;height:21.39px;line-height:20.89px">8</div>
<div class="rh" style="top:250.16px;height:21.39px;line-height:20.89px">9</div>
<div class="rh" style="top:271.55px;height:21.39px;line-height:20.89px">10</div>
<div class="rh" style="top:292.94px;height:21.39px;line-height:20.89px">11</div>
<div class="rh" style="top:314.33px;height:21.39px;line-height:20.89px">12</div>
<div class="rh" style="top:335.72px;height:21.39px;line-height:20.89px">13</div>
<div class="rh" style="top:357.11px;height:21.39px;line-height:20.89px">14</div>
<div class="rh" style="top:378.50px;height:21.39px;line-height:20.89px">15</div>
<div class="rh" style="top:399.89px;height:21.39px;line-height:20.89px">16</div>
<div class="rh" style="top:421.28px;height:21.39px;line-height:20.89px">17</div>
<div class="rh" style="top:442.67px;height:21.39px;line-height:20.89px">18</div>
<div class="rh" style="top:464.06px;height:21.39px;line-height:20.89px">19</div>
<div class="rh" style="top:485.45px;height:21.39px;line-height:20.89px">20</div>
<div class="rh" style="top:506.84px;height:21.39px;line-height:20.89px">21</div>
<div class="rh" style="top:528.23px;height:21.39px;line-height:20.89px">22</div>
<div class="rh" style="top:549.62px;height:21.39px;line-height:20.89px">23</div>
<svg style="left:0;top:0" width="35" height="573">
<line x1="0" x2="34.5" y1="109.00" y2="109.00" stroke="#cfd0d3" stroke-width="0.9"/>
<line x1="0" x2="34.5" y1="110.70" y2="110.70" stroke="#cfd0d3" stroke-width="0.9"/>
<line x1="0" x2="34.5" y1="136.60" y2="136.60" stroke="#cfd0d3" stroke-width="0.9"/>
<line x1="0" x2="34.5" y1="185.89" y2="185.89" stroke="#cfd0d3" stroke-width="0.9"/>
<line x1="0" x2="34.5" y1="207.28" y2="207.28" stroke="#cfd0d3" stroke-width="0.9"/>
<line x1="0" x2="34.5" y1="228.67" y2="228.67" stroke="#cfd0d3" stroke-width="0.9"/>
<line x1="0" x2="34.5" y1="250.06" y2="250.06" stroke="#cfd0d3" stroke-width="0.9"/>
<line x1="0" x2="34.5" y1="271.45" y2="271.45" stroke="#cfd0d3" stroke-width="0.9"/>
<line x1="0" x2="34.5" y1="292.84" y2="292.84" stroke="#cfd0d3" stroke-width="0.9"/>
<line x1="0" x2="34.5" y1="314.23" y2="314.23" stroke="#cfd0d3" stroke-width="0.9"/>
<line x1="0" x2="34.5" y1="335.62" y2="335.62" stroke="#cfd0d3" stroke-width="0.9"/>
<line x1="0" x2="34.5" y1="357.01" y2="357.01" stroke="#cfd0d3" stroke-width="0.9"/>
<line x1="0" x2="34.5" y1="378.40" y2="378.40" stroke="#cfd0d3" stroke-width="0.9"/>
<line x1="0" x2="34.5" y1="399.79" y2="399.79" stroke="#cfd0d3" stroke-width="0.9"/>
<line x1="0" x2="34.5" y1="421.18" y2="421.18" stroke="#cfd0d3" stroke-width="0.9"/>
<line x1="0" x2="34.5" y1="442.57" y2="442.57" stroke="#cfd0d3" stroke-width="0.9"/>
<line x1="0" x2="34.5" y1="463.96" y2="463.96" stroke="#cfd0d3" stroke-width="0.9"/>
<line x1="0" x2="34.5" y1="485.35" y2="485.35" stroke="#cfd0d3" stroke-width="0.9"/>
<line x1="0" x2="34.5" y1="506.74" y2="506.74" stroke="#cfd0d3" stroke-width="0.9"/>
<line x1="0" x2="34.5" y1="528.13" y2="528.13" stroke="#cfd0d3" stroke-width="0.9"/>
<line x1="0" x2="34.5" y1="549.52" y2="549.52" stroke="#cfd0d3" stroke-width="0.9"/>
<line x1="0" x2="34.5" y1="570.91" y2="570.91" stroke="#cfd0d3" stroke-width="0.9"/>
</svg>
<div class="abs" style="left:0;top:161px;width:35px;height:2.4px;background:#c6c8c9"></div>
<div class="abs" style="left:0;top:163.4px;width:35px;height:1.2px;background:#e2e4e5"></div>
<div class="abs" style="left:1007px;top:166.3px;width:262.5px;height:222.5px;border:1.3px solid #cfd0d1;box-sizing:border-box;background:#f8f9fa"></div>
<div class="t" style="left:1007px;width:262px;top:177.8px;text-align:center;font-size:9.05px;font-weight:700;color:#1f1f1f">Avg Calories &amp; Protein by Category</div>
<div class="abs" style="left:1082px;top:195px;width:9px;height:9px;background:#5fa79e"></div>
<div class="t" style="left:1097px;top:195.5px;font-size:7.4px;font-weight:700;color:#2a2a2a;letter-spacing:0.2px">Avg Cal</div>
<div class="abs" style="left:1137px;top:195px;width:9px;height:9px;background:#e6dc8e"></div>
<div class="t" style="left:1152px;top:195.5px;font-size:7.4px;font-weight:700;color:#2a2a2a;letter-spacing:0.2px">Avg Protein</div>
<div class="t" style="left:1010px;width:60px;top:223.2px;text-align:right;font-size:7.45px;font-weight:700;color:#1e1e1e;letter-spacing:0.02px">Breakfast</div>
<div class="abs" style="left:1074px;top:221px;width:122.0px;height:5px;background:#64aaa2;border-radius:0 2.5px 2.5px 0"></div>
<div class="abs" style="left:1074px;top:228px;width:5.8px;height:4.6px;background:#e6dc8e;border-radius:0 2px 2px 0"></div>
<div class="t" style="left:1010px;width:60px;top:244.2px;text-align:right;font-size:7.45px;font-weight:700;color:#1e1e1e;letter-spacing:0.02px">Lunch</div>
<div class="abs" style="left:1074px;top:242px;width:146.0px;height:5px;background:#64aaa2;border-radius:0 2.5px 2.5px 0"></div>
<div class="abs" style="left:1074px;top:249px;width:9.8px;height:4.6px;background:#e6dc8e;border-radius:0 2px 2px 0"></div>
<div class="t" style="left:1010px;width:60px;top:265.2px;text-align:right;font-size:7.45px;font-weight:700;color:#1e1e1e;letter-spacing:0.02px">Dinner</div>
<div class="abs" style="left:1074px;top:263px;width:164.0px;height:5px;background:#64aaa2;border-radius:0 2.5px 2.5px 0"></div>
<div class="abs" style="left:1074px;top:270px;width:9.8px;height:4.6px;background:#e6dc8e;border-radius:0 2px 2px 0"></div>
<div class="t" style="left:1010px;width:60px;top:286.2px;text-align:right;font-size:7.45px;font-weight:700;color:#1e1e1e;letter-spacing:0.02px">Snack</div>
<div class="abs" style="left:1074px;top:284px;width:67.8px;height:5px;background:#64aaa2;border-radius:0 2.5px 2.5px 0"></div>
<div class="abs" style="left:1074px;top:291px;width:2.0px;height:4.6px;background:#e6dc8e;border-radius:0 2px 2px 0"></div>
<div class="t" style="left:1010px;width:60px;top:307.2px;text-align:right;font-size:7.45px;font-weight:700;color:#1e1e1e;letter-spacing:0.02px">Dessert</div>
<div class="t" style="left:1010px;width:60px;top:328.2px;text-align:right;font-size:7.45px;font-weight:700;color:#1e1e1e;letter-spacing:0.02px">Beverage</div>
<div class="abs" style="left:1074px;top:326px;width:101.6px;height:5px;background:#64aaa2;border-radius:0 2.5px 2.5px 0"></div>
<div class="abs" style="left:1074px;top:333px;width:7.0px;height:4.6px;background:#e6dc8e;border-radius:0 2px 2px 0"></div>
<div class="t" style="left:1010px;width:60px;top:349.2px;text-align:right;font-size:7.45px;font-weight:700;color:#1e1e1e;letter-spacing:0.02px">Salad</div>
<div class="abs" style="left:1074px;top:347px;width:138.0px;height:5px;background:#64aaa2;border-radius:0 2.5px 2.5px 0"></div>
<div class="abs" style="left:1074px;top:354px;width:9.8px;height:4.6px;background:#e6dc8e;border-radius:0 2px 2px 0"></div>
<div class="t" style="left:1010px;width:60px;top:370.2px;text-align:right;font-size:7.45px;font-weight:700;color:#1e1e1e;letter-spacing:0.02px">Soup</div>
<div class="abs" style="left:1074px;top:368px;width:108.3px;height:5px;background:#64aaa2;border-radius:0 2.5px 2.5px 0"></div>
<div class="abs" style="left:1074px;top:375px;width:6.5px;height:4.6px;background:#e6dc8e;border-radius:0 2px 2px 0"></div>
<div class="abs" style="left:1007px;top:392px;width:262.5px;height:170.5px;border:1.3px solid #cfd0d1;box-sizing:border-box;background:#f8f9fa"></div>
<div class="t" style="left:1016px;top:401px;font-size:7.65px;font-weight:700;color:#1f1f1f">Recipes by Category</div>
<svg style="left:0;top:0" width="1280" height="573" viewBox="0 0 1280 573">
<path d="M1138.10 414.30 A56.2 56.2 0 0 1 1191.55 453.13 L1156.93 464.38 A19.8 19.8 0 0 0 1138.10 450.70 Z" fill="#64ada5"/>
<path d="M1191.55 453.13 A56.2 56.2 0 0 1 1171.13 515.97 L1149.74 486.52 A19.8 19.8 0 0 0 1156.93 464.38 Z" fill="#e0dd97"/>
<path d="M1171.13 515.97 A56.2 56.2 0 0 1 1094.80 506.32 L1122.84 483.12 A19.8 19.8 0 0 0 1149.74 486.52 Z" fill="#2a6a7b"/>
<path d="M1094.80 506.32 A56.2 56.2 0 0 1 1084.65 453.13 L1119.27 464.38 A19.8 19.8 0 0 0 1122.84 483.12 Z" fill="#f2b55f"/>
<path d="M1084.65 453.13 A56.2 56.2 0 0 1 1099.63 429.53 L1124.55 456.07 A19.8 19.8 0 0 0 1119.27 464.38 Z" fill="#8bc34a"/>
<path d="M1099.63 429.53 A56.2 56.2 0 0 1 1111.03 421.25 L1128.56 453.15 A19.8 19.8 0 0 0 1124.55 456.07 Z" fill="#f4693e"/>
<path d="M1111.03 421.25 A56.2 56.2 0 0 1 1138.10 414.30 L1138.10 450.70 A19.8 19.8 0 0 0 1128.56 453.15 Z" fill="#7b86cc"/>
<circle cx="1138.1" cy="470.5" r="19.8" fill="#ffffff"/>
<circle cx="1046.5" cy="536.5" r="4.4" fill="#64ada5"/>
<circle cx="1105.7" cy="536.5" r="4.4" fill="#e0dd97"/>
<circle cx="1153.6" cy="536.5" r="4.4" fill="#2a6a7b"/>
<circle cx="1203" cy="536.5" r="4.4" fill="#f2b55f"/>
<circle cx="1073.3" cy="548.6" r="4.4" fill="#8bc34a"/>
<circle cx="1133.6" cy="548.6" r="4.4" fill="#f4693e"/>
<circle cx="1181" cy="548.6" r="4.4" fill="#7b86cc"/>
</svg>
<div class="t" style="left:1056.8px;top:532.9px;font-size:7.05px;font-weight:700;color:#2a2a2a">Breakfast</div>
<div class="t" style="left:1116px;top:532.9px;font-size:7.05px;font-weight:700;color:#2a2a2a">Lunch</div>
<div class="t" style="left:1164px;top:532.9px;font-size:7.05px;font-weight:700;color:#2a2a2a">Dinner</div>
<div class="t" style="left:1213.6px;top:532.9px;font-size:7.05px;font-weight:700;color:#2a2a2a">Snack</div>
<div class="t" style="left:1084px;top:545px;font-size:7.05px;font-weight:700;color:#2a2a2a">Beverage</div>
<div class="t" style="left:1143.9px;top:545px;font-size:7.05px;font-weight:700;color:#2a2a2a">Salad</div>
<div class="t" style="left:1190.4px;top:545px;font-size:7.05px;font-weight:700;color:#2a2a2a">Soup</div>
<div class="abs" style="left:0;top:570.5px;width:1277px;height:2.5px;background:#fff"></div>
<div class="abs" style="left:35px;top:570.3px;width:1242px;height:1px;background:#d8d9da"></div>
<div class="abs" style="left:37px;top:571px;width:339px;height:2px;background:#c9cacb"></div>
<div class="abs" style="left:1277px;top:58px;width:3px;height:515px;background:#fbfbfb"></div>
<div class="abs" style="left:1276.5px;top:58px;width:1px;height:515px;background:#d6d7d8"></div>
<div class="abs" style="left:1278px;top:166px;width:2px;height:60px;background:#d2d3d4;border-radius:2px"></div>
<div class="abs" style="left:1260px;top:570.5px;width:20px;height:2.5px;background:#f1f1f1"></div>
<div class="abs" style="left:1254px;top:571px;width:1px;height:2px;background:#dcdcdc"></div>
<div class="abs" style="left:1266px;top:571px;width:1px;height:2px;background:#dcdcdc"></div>
<div class="abs" style="left:1277px;top:557px;width:3px;height:1px;background:#dcdcdc"></div>
</body></html>
